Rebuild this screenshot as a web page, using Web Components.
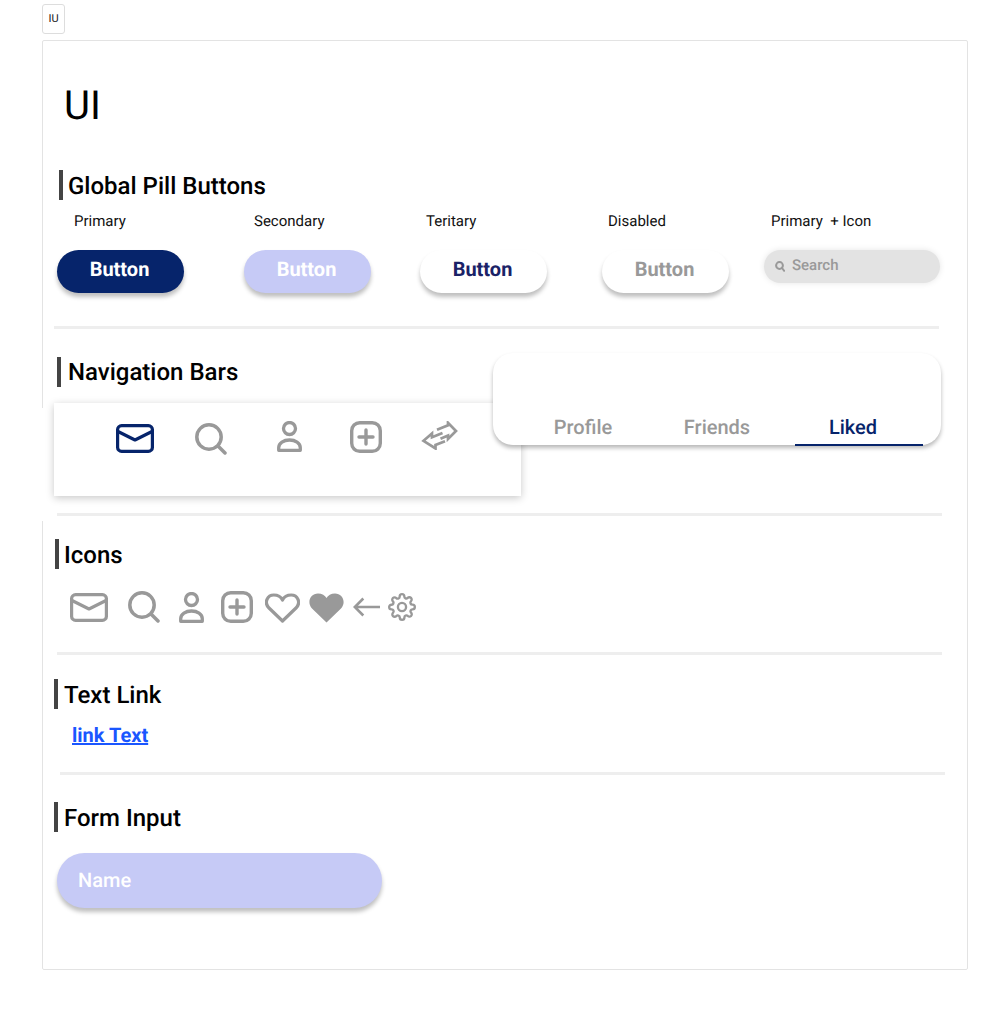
<!DOCTYPE html>
<html lang="en">
<head>
<meta charset="utf-8">
<title>UI</title>
<style>
html,body{margin:0;background:#fff}
body{font-family:Roboto,"Liberation Sans",sans-serif;color:#000;text-rendering:geometricPrecision}
.row{display:flex}
</style>
</head>
<body>
<ui-chip>IU</ui-chip>
<ui-card>
  <ui-title>UI</ui-title>

  <ui-heading style="margin:35px 0 0 16px">Global Pill Buttons</ui-heading>
  <div class="row" style="margin:11px 0 0 14px">
    <ui-variant label="Primary" style="--off:17px;width:127px"><ui-pill kind="primary">Button</ui-pill></ui-variant>
    <ui-variant label="Secondary" style="--off:10px;width:127px;margin-left:60px"><ui-pill kind="secondary">Button</ui-pill></ui-variant>
    <ui-variant label="Teritary" style="--off:6px;width:127px;margin-left:49px"><ui-pill kind="tertiary">Button</ui-pill></ui-variant>
    <ui-variant label="Disabled" style="--off:6px;width:127px;margin-left:55px"><ui-pill kind="disabled">Button</ui-pill></ui-variant>
    <ui-variant label="Primary  + Icon" style="--off:7px;width:176px;margin-left:35px"><ui-search>Search</ui-search></ui-variant>
  </div>
  <ui-rule style="margin:33px 0 0 11px"></ui-rule>

  <ui-heading style="margin:28px 0 0 14px;--pad:7px;--dy:0px">Navigation Bars</ui-heading>
  <ui-navbar style="margin:16px 0 0 11px">
    <ui-icon name="mail" style="color:#06246b;margin:3px 41px 0 0"></ui-icon>
    <ui-icon name="search" style="margin:2px 50px 0 0"></ui-icon>
    <ui-icon name="person" style="margin-right:48px"></ui-icon>
    <ui-icon name="plus" style="margin-right:39px"></ui-icon>
    <ui-icon name="swap"></ui-icon>
  </ui-navbar>
  <ui-tabs>
    <span slot="a">Profile</span>
    <span slot="b">Friends</span>
    <span slot="c">Liked</span>
  </ui-tabs>
  <ui-rule style="margin:17px 0 0 14px"></ui-rule>

  <ui-heading style="margin:23px 0 0 12px">Icons</ui-heading>
  <div class="row" style="margin:22px 0 0 27px;height:32px;align-items:center">
    <ui-icon name="mail" style="margin-right:20px"></ui-icon>
    <ui-icon name="search" style="margin-right:19px"></ui-icon>
    <ui-icon name="person" style="margin-right:17px"></ui-icon>
    <ui-icon name="plus" style="margin-right:12px"></ui-icon>
    <ui-icon name="heart" style="margin:2px 9px 0 0"></ui-icon>
    <ui-icon name="heartfill" style="margin:2px 9px 0 0"></ui-icon>
    <ui-icon name="back" style="margin:0 8px 0 0"></ui-icon>
    <ui-icon name="gear"></ui-icon>
  </div>
  <ui-rule style="margin:29px 0 0 14px"></ui-rule>

  <ui-heading style="margin:24px 0 0 11px;--pad:6px">Text Link</ui-heading>
  <ui-link style="margin:11px 0 0 29px">link Text</ui-link>
  <ui-rule style="margin:22px 0 0 17px"></ui-rule>

  <ui-heading style="margin:27px 0 0 11px;--pad:6px">Form Input</ui-heading>
  <ui-field style="margin:21px 0 0 14px">Name</ui-field>

  <ui-mask></ui-mask>
</ui-card>

<script>
const ICONS = {
  mail:{w:38,h:29,svg:'<rect x="1.600" y="1.600" width="34.800" height="25.800" rx="4" fill="none" stroke="currentColor" stroke-width="3.200"/><path d="M2 7.500 19 16 36 7.500" fill="none" stroke="currentColor" stroke-width="3.200" stroke-linejoin="round"/>'},
  search:{w:32,h:32,svg:'<circle cx="14" cy="14" r="12.200" fill="none" stroke="currentColor" stroke-width="3.500"/><path d="M23 23 30 30" fill="none" stroke="currentColor" stroke-width="3.500" stroke-linecap="round"/>'},
  person:{w:25,h:31,svg:'<circle cx="12.500" cy="7.500" r="6" fill="none" stroke="currentColor" stroke-width="3.300"/><path d="M1.700 29.300v-2.500c0-5 5-7.800 10.800-7.800s10.800 2.800 10.800 7.800v2.500z" fill="none" stroke="currentColor" stroke-width="3.300" stroke-linejoin="round"/>'},
  plus:{w:32,h:32,svg:'<rect x="1.700" y="1.700" width="28.600" height="28.600" rx="8" fill="none" stroke="currentColor" stroke-width="3.400"/><path d="M16 9V23M9 16H23" fill="none" stroke="currentColor" stroke-width="3.400" stroke-linecap="round"/>'},
  swap:{w:37,h:29,svg:'<path d="M16 8.700 27 4.300 27 1.800 35 10 27 18 27 14.500 19.500 17.800M21.500 12 11 16.300 11 12.500 2.500 19.800 14.500 27.500 14.500 24 24 20.300" fill="none" stroke="currentColor" stroke-width="2.700" stroke-linejoin="miter"/>'},
  heart:{w:35,h:30,svg:'<path d="M17.500 28 3.500 14.500C-.9 9.500 2.200 2 8.800 2 12.800 2 16 4 17.500 7 19 4 22.200 2 26.200 2 32.800 2 35.900 9.500 31.500 14.500Z" fill="none" stroke="currentColor" stroke-width="3.200" stroke-linejoin="round"/>'},
  heartfill:{w:35,h:30,svg:'<path d="M17.500 29.500 3 15.500C-2.600 9 1.500 .5 9 .5 13 .5 16 2.500 17.500 5 19 2.500 22 .5 26 .5 33.500 .5 37.600 9 32 15.500Z" fill="currentColor"/>'},
  back:{w:27,h:20,svg:'<path d="M27 10H1.800M10.300 1.500 1.800 10 10.300 18.500" fill="none" stroke="currentColor" stroke-width="2.600"/>'},
  gear:{w:28,h:28,vb:'0 0 24 24',svg:'<circle cx="12" cy="12" r="3.500" fill="none" stroke="currentColor" stroke-width="2"/><path fill="none" stroke="currentColor" stroke-width="2" stroke-linecap="round" stroke-linejoin="round" d="M19.400 15a1.650 1.650 0 0 0 .33 1.820l.06.06a2 2 0 0 1 0 2.830 2 2 0 0 1-2.830 0l-.06-.06a1.650 1.650 0 0 0-1.820-.33 1.650 1.650 0 0 0-1 1.510V21a2 2 0 0 1-2 2 2 2 0 0 1-2-2v-.09A1.650 1.650 0 0 0 9 19.400a1.650 1.650 0 0 0-1.820.33l-.06.06a2 2 0 0 1-2.830 0 2 2 0 0 1 0-2.830l.06-.06a1.650 1.650 0 0 0 .33-1.820 1.650 1.650 0 0 0-1.510-1H3a2 2 0 0 1-2-2 2 2 0 0 1 2-2h.09A1.650 1.650 0 0 0 4.600 9a1.650 1.650 0 0 0-.33-1.820l-.06-.06a2 2 0 0 1 0-2.830 2 2 0 0 1 2.830 0l.06.06a1.650 1.650 0 0 0 1.820.33H9a1.650 1.650 0 0 0 1-1.510V3a2 2 0 0 1 2-2 2 2 0 0 1 2 2v.09a1.650 1.650 0 0 0 1 1.510 1.650 1.650 0 0 0 1.820-.33l.06-.06a2 2 0 0 1 2.830 0 2 2 0 0 1 0 2.830l-.06.06a1.650 1.650 0 0 0-.33 1.820V9a1.650 1.650 0 0 0 1.510 1H21a2 2 0 0 1 2 2 2 2 0 0 1-2 2h-.09a1.650 1.650 0 0 0-1.510 1z"/>'}
};

function define(tag, css, html){
  customElements.define(tag, class extends HTMLElement{
    constructor(){
      super();
      const root = this.attachShadow({mode:'open'});
      root.innerHTML = '<style>'+css+'</style>'+(typeof html==='function'?html(this):html);
    }
  });
}

define('ui-chip',':host{display:flex;box-sizing:border-box;width:23px;height:30px;margin:4px 0 0 42px;align-items:center;justify-content:center;border:1px solid #ddd;border-radius:3px;font-size:11px;color:#222;padding-bottom:1px}','<slot></slot>');
define('ui-card',':host{display:flex;flex-direction:column;position:relative;box-sizing:border-box;width:926px;height:930px;margin:6px 0 0 42px;border:1px solid #e3e3e3;border-radius:2px;background:#fff}','<slot></slot>');
define('ui-mask',':host{position:absolute;left:-1px;top:367px;width:1px;height:113px;background:#fff}','');
define('ui-title',':host{display:block;height:60px;margin:35px 0 -1px 21px;font-size:40px;line-height:60px;font-weight:400}','<slot></slot>');
define('ui-heading',':host{display:flex;height:30px;align-items:center;font-size:24px;font-weight:500;line-height:30px}.bar{width:4px;height:30px;background:#444;flex:none;margin-right:var(--pad,5px)}.t{position:relative;top:var(--dy,1px)}','<span class="bar"></span><span class="t"><slot></slot></span>');
define('ui-rule',':host{display:block;width:885px;height:3px;background:#eee;flex:none}','');
define('ui-variant',':host{display:block;flex:none}.l{display:block;height:20px;line-height:20px;font-size:15px;margin:0 0 19px var(--off,0);white-space:pre;color:#111}',
  el=>'<span class="l">'+el.getAttribute('label')+'</span><slot></slot>');
define('ui-pill',':host{display:flex;box-sizing:border-box;height:43px;width:127px;align-items:center;justify-content:center;border-radius:22px;font-size:20px;font-weight:700;padding:0 2px 6px 0;box-shadow:0 4px 4px rgba(0,0,0,.25)}'+
  ':host([kind=primary]){background:#06246b;color:#fff}:host([kind=secondary]){background:#c6caf6;color:#fff}:host([kind=tertiary]){background:#fff;color:#1a2267}:host([kind=disabled]){background:#fff;color:#999}','<slot></slot>');
define('ui-search',':host{display:flex;box-sizing:border-box;height:33px;width:176px;align-items:center;padding:0 0 3px 11px;gap:7px;border-radius:17px;background:#e3e3e3;color:#999;font-size:15px;font-weight:500;box-shadow:0 0 6px rgba(0,0,0,.1)}svg{flex:none;margin-top:3px}',
  '<svg width="10" height="11" viewBox="0 0 10 11"><circle cx="4.500" cy="4.500" r="3.400" fill="none" stroke="currentColor" stroke-width="2"/><path d="M7 7 9.200 9.800" stroke="currentColor" stroke-width="2" stroke-linecap="round"/></svg><slot></slot>');
define('ui-icon',':host{display:block;flex:none;color:#999;line-height:0}svg{display:block}',el=>{
  const i=ICONS[el.getAttribute('name')];
  return '<svg width="'+i.w+'" height="'+i.h+'" viewBox="'+(i.vb||('0 0 '+i.w+' '+i.h))+'">'+i.svg+'</svg>';
});
define('ui-navbar',':host{display:flex;box-sizing:border-box;width:467px;height:93px;padding:18px 0 0 62px;align-items:flex-start;background:#fff;box-shadow:0 2px 8px rgba(0,0,0,.22);flex:none}','<slot></slot>');
define('ui-tabs',':host{position:absolute;left:450px;top:312px;width:448px;height:92px;box-sizing:border-box;background:#fff;border-radius:20px;box-shadow:0 3px 4px rgba(0,0,0,.28);display:block;font-size:20px;font-weight:500;color:#999}'+
  '.t{position:absolute;top:59px;height:30px;line-height:30px;width:128px;text-align:center}.a{left:26px}.b{left:160px}.c{left:296px;color:#06246b}'+
  '.u{position:absolute;left:302px;top:91px;width:128px;height:2px;background:#06246b}',
  '<span class="t a"><slot name="a"></slot></span><span class="t b"><slot name="b"></slot></span><span class="t c"><slot name="c"></slot></span><span class="u"></span>');
define('ui-link',':host{display:block;height:30px;line-height:30px;font-size:20px;font-weight:700;color:#1a56ff;text-decoration:underline}','<slot></slot>');
define('ui-field',':host{display:flex;box-sizing:border-box;width:325px;height:55px;padding:0 0 2px 21px;align-items:center;border-radius:28px;background:#c6caf6;color:#fff;font-size:20px;font-weight:500;box-shadow:0 4px 4px rgba(0,0,0,.25)}','<slot></slot>');
</script>
</body>
</html>
